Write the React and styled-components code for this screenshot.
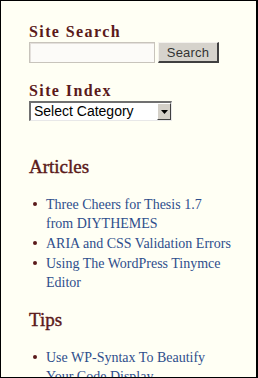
import React from "react";
import styled, { createGlobalStyle } from "styled-components";

const Global = createGlobalStyle`
  html, body { margin: 0; padding: 0; background: #fffff4; }
  * { box-sizing: border-box; }
`;

const Frame = styled.div`
  width: 258px;
  height: 378px;
  overflow: hidden;
  background: #fffff4;
  border-style: solid;
  border-color: #000;
  border-width: 1px 2px 1px 1px;
  padding: 22px 21px 0 28px;
  font-family: "Liberation Serif", "Times New Roman", serif;
`;

const WidgetTitle = styled.h3`
  margin: 0;
  font-family: "Liberation Serif", "Times New Roman", serif;
  font-weight: bold;
  font-size: 16px;
  letter-spacing: 1.4px;
  line-height: 18px;
  color: #5a1a1a;
`;

const Section = styled.div`
  margin-bottom: ${(p) => p.$mb || 0}px;
`;

const SearchRow = styled.div`
  display: flex;
  gap: 3px;
  margin-top: 1px;
`;

const TextInput = styled.div`
  width: 126px;
  height: 21px;
  border: 1px solid #c8c4bc;
  box-shadow: inset 1px 1px 0 #e4e0dc;
  background: #fcfbf8;
`;

const Button = styled.div`
  width: 61px;
  height: 21px;
  background: #d6d3cc;
  border-style: solid;
  border-width: 1px 2px 2px 1px;
  border-color: #f4f2ee #404040 #404040 #f4f2ee;
  font-family: "Liberation Sans", Arial, sans-serif;
  font-size: 13px;
  color: #333;
  display: flex;
  align-items: center;
  justify-content: center;
  letter-spacing: 0.2px;
`;

const SelectBox = styled.div`
  width: 143px;
  height: 20px;
  margin-top: 1px;
  border-style: solid;
  border-width: 2px 1px 1px 2px;
  border-color: #707070 #e8e8e8 #e8e8e8 #707070;
  background: #fff;
  display: flex;
  align-items: stretch;
  justify-content: space-between;
  font-family: "Liberation Sans", Arial, sans-serif;
  font-size: 14px;
  color: #000;
`;

const SelectText = styled.span`
  padding-left: 3px;
  line-height: 16px;
`;

const ArrowButton = styled.span`
  width: 14px;
  background: #d4d0c8;
  border-style: solid;
  border-width: 1px;
  border-color: #fff #404040 #404040 #fff;
  display: flex;
  align-items: center;
  justify-content: center;
`;

const SectionTitle = styled.h2`
  margin: 0;
  font-family: "Liberation Serif", "Times New Roman", serif;
  font-weight: normal;
  font-size: 19px;
  line-height: 24px;
  color: #5a1a1a;
  -webkit-text-stroke: 0.4px #5a1a1a;
`;

const List = styled.ul`
  margin: 16px 0 0 0;
  padding: 0 0 0 17px;
  list-style: none;
`;

const Item = styled.li`
  position: relative;
  font-size: 14px;
  line-height: 19px;
  margin-bottom: 1px;
  color: #2e4e8c;
  &::before {
    content: "";
    position: absolute;
    left: -13px;
    top: 7px;
    width: 4px;
    height: 4px;
    border-radius: 50%;
    background: #5a1a1a;
  }
`;

const Link = styled.a`
  color: #2e4e8c;
  text-decoration: none;
`;

export default function App() {
  return (
    <>
      <Global />
      <Frame>
        <Section $mb={19}>
          <WidgetTitle>Site Search</WidgetTitle>
          <SearchRow>
            <TextInput />
            <Button>Search</Button>
          </SearchRow>
        </Section>
        <Section $mb={34}>
          <WidgetTitle>Site Index</WidgetTitle>
          <SelectBox>
            <SelectText>Select Category</SelectText>
            <ArrowButton>
              <svg width="7" height="4" viewBox="0 0 7 4">
                <polygon points="0,0 7,0 3.5,4" fill="#000" />
              </svg>
            </ArrowButton>
          </SelectBox>
        </Section>
        <Section $mb={16}>
          <SectionTitle>Articles</SectionTitle>
          <List>
            <Item><Link href="#">Three Cheers for Thesis 1.7 from{"\u00a0"}DIYTHEMES</Link></Item>
            <Item><Link href="#">ARIA and CSS Validation Errors</Link></Item>
            <Item><Link href="#">Using The WordPress Tinymce Editor</Link></Item>
          </List>
        </Section>
        <Section>
          <SectionTitle>Tips</SectionTitle>
          <List>
            <Item><Link href="#">Use WP-Syntax To Beautify Your Code Display</Link></Item>
          </List>
        </Section>
      </Frame>
    </>
  );
}
